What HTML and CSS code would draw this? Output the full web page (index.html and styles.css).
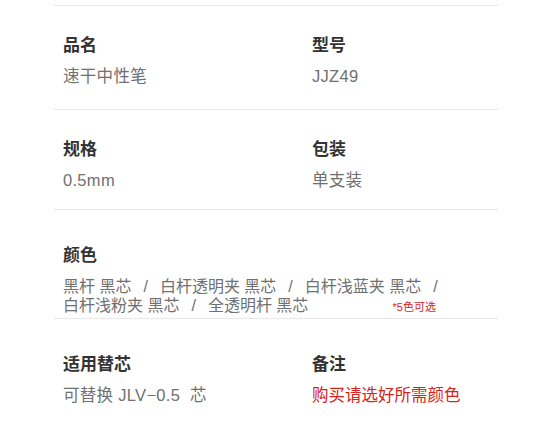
FILE: index.html
```html
<!DOCTYPE html>
<html lang="zh-CN">
<head>
    <meta charset="UTF-8">
    <meta name="viewport" content="width=device-width, initial-scale=1.0">
    <title>商品参数</title>
    <link rel="stylesheet" href="styles.css">
</head>
<body>
    <div id="spec">
        <div class="row row-first">
            <div class="cell">
                <h3>品名</h3>
                <p>速干中性笔</p>
            </div>
            <div class="cell">
                <h3>型号</h3>
                <p>JJZ49</p>
            </div>
        </div>
        <div class="row row-second">
            <div class="cell">
                <h3>规格</h3>
                <p>0.5mm</p>
            </div>
            <div class="cell">
                <h3>包装</h3>
                <p>单支装</p>
            </div>
        </div>
        <div class="row row-color">
            <div class="cell wide">
                <h3>颜色</h3>
                <div class="colors">
                    <div class="line">黑杆 黑芯<span class="sep">/</span>白杆透明夹 黑芯<span class="sep">/</span>白杆浅蓝夹 黑芯<span class="sep">/</span></div>
                    <div class="line">白杆浅粉夹 黑芯<span class="sep">/</span>全透明杆 黑芯<span class="note">*5色可选</span></div>
                </div>
            </div>
        </div>
        <div class="row row-last">
            <div class="cell">
                <h3>适用替芯</h3>
                <p>可替换 JLV−0.5&nbsp;&nbsp;芯</p>
            </div>
            <div class="cell">
                <h3>备注</h3>
                <p class="red">购买请选好所需颜色</p>
            </div>
        </div>
    </div>
</body>
</html>
```

FILE: styles.css
```css
*{
    margin: 0;
    padding: 0;
}
body{
    background: #ffffff;
    font-family: "Liberation Sans", "Noto Sans CJK SC", sans-serif;
}
#spec{
    margin: 5px 0 0 54px;
    width: 444px;
}
.row{
    border-top: 1px solid #e8e8e8;
    display: grid;
    grid-template-columns: 249px 1fr;
    padding-left: 9px;
}
.row-first{
    padding-top: 29px;
    padding-bottom: 22px;
}
.row-second{
    padding-top: 29px;
    padding-bottom: 18px;
}
.row-color{
    padding-top: 35px;
    padding-bottom: 1px;
}
.row-last{
    padding-top: 35px;
    padding-bottom: 24px;
}
.cell.wide{
    grid-column: 1 / 3;
}
.cell h3{
    font-size: 17px;
    line-height: 22px;
    font-weight: bold;
    color: #333333;
}
.cell p{
    margin-top: 8px;
    font-size: 16.5px;
    line-height: 22px;
    color: #707070;
    letter-spacing: 0.3px;
}
.cell p.red{
    color: #d8231c;
    letter-spacing: 0;
}
.colors{
    margin-top: 10px;
    width: 373px;
}
.line{
    display: flex;
    align-items: baseline;
    font-size: 16px;
    line-height: 19px;
    color: #707070;
    white-space: nowrap;
}
.sep{
    margin: 0 12px;
}
.note{
    margin-left: auto;
    font-size: 11px;
    color: #d8231c;
}
```
